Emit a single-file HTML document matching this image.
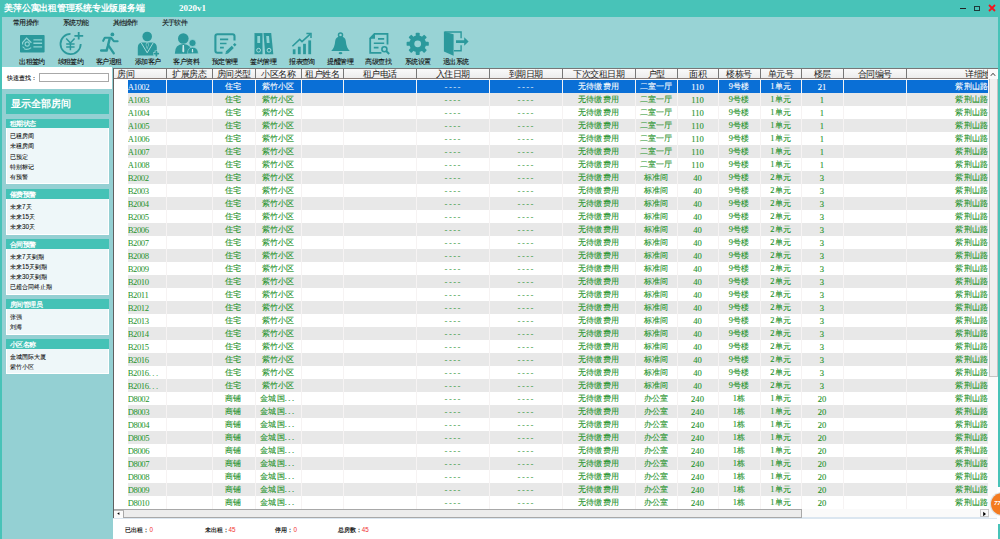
<!DOCTYPE html><html><head><meta charset="utf-8"><style>
*{margin:0;padding:0;box-sizing:border-box}
html,body{width:1000px;height:539px;overflow:hidden}
body{position:relative;background:#48c3b8;font-family:"Liberation Sans",sans-serif;color:#000}
.a{position:absolute}
.t{white-space:nowrap;line-height:1}
#title{left:4.3px;top:3.8px;font-family:"Liberation Serif",serif;font-weight:bold;font-size:9px;color:#fff;letter-spacing:-0.25px}
#ver{left:179px;top:4px;font-family:"Liberation Serif",serif;font-weight:bold;font-size:9px;color:#fff}
#main{left:2px;top:17px;width:996px;height:522px;background:#98d3d5}
.menu{top:19.2px;font-size:7px;letter-spacing:-0.7px;color:#111;-webkit-text-stroke:0.1px #111}
.tb{top:57.6px;font-size:7px;letter-spacing:-0.55px;color:#111;-webkit-text-stroke:0.1px #111;width:40px;text-align:center}
.ico{top:30px;width:30px;height:28px}
#hl{left:2px;top:66px;width:996px;height:1px;background:#8fdad9}
#left{left:2px;top:67px;width:111px;height:472px;background:#94d0d3}
#srch{left:2px;top:67px;width:110px;height:22px;background:#fff}
#srchl{left:6.5px;top:74.8px;font-size:6px;color:#111;-webkit-text-stroke:0.1px #111}
#srchi{left:38.5px;top:73.4px;width:70px;height:9px;border:1px solid #a8a8a8;background:#fff}
#showall{left:6px;top:93.5px;width:102.5px;height:20.3px;background:#44c2b6}
#showallt{left:11px;top:98.5px;font-family:"Liberation Serif",serif;font-size:10.2px;color:#fff;font-weight:bold}
.sh{left:6px;width:102.5px;height:9.8px;background:#44c2b6}
.sht{left:10px;font-size:7px;letter-spacing:-0.6px;color:#fff;font-weight:bold}
.sb{left:6px;width:102.5px;background:#eef7f9;border:1px solid #fff;border-top:0}
.si{left:10px;font-size:6.3px;color:#111;-webkit-text-stroke:0.08px #111}
#grid{left:113px;top:68px;width:885px;height:450px;background:#fff}
#gb{left:113px;top:68px;width:885px;height:450px;border-left:1px solid #606060;border-top:1px solid #777}
#hdr{left:114px;top:69px;width:874px;height:10px;background:linear-gradient(#fafafa,#ececec);border-bottom:1px solid #8a7d78}
.hc{top:69px;height:10px;font-size:9px;letter-spacing:-0.5px;color:#1a1a1a;text-align:center;line-height:11px;overflow:hidden}
.hd{top:69px;width:1.5px;height:10px;background:#777}
.row{left:128px;width:860px;height:13px}
.g{background:#e8e8e8}
.sel{background:#0a6fd6}
.c{height:13px;line-height:14px;font-size:8.4px;letter-spacing:0.15px;color:#24922a;-webkit-text-stroke:0.1px currentColor;text-align:center;overflow:hidden;white-space:nowrap;font-family:"Liberation Serif",serif}
.m{font-family:"Liberation Serif",serif;letter-spacing:-0.4px;font-size:8.6px;-webkit-text-stroke:0}
.n{font-family:"Liberation Serif",serif;font-size:8.6px;letter-spacing:0}
.dsh{font-family:"Liberation Mono",monospace;font-size:7.4px;letter-spacing:-0.1px;-webkit-text-stroke:0.15px currentColor}
.ell{letter-spacing:1.6px}
.sel .c{color:#fff}
.vl{width:1px;background:#f6f3f3}
#vsb{left:988px;top:69px;width:9.5px;height:440px;background:#fbfbfb}
#vth{left:988.5px;top:79px;width:9px;height:298px;background:#efefef;border:1px solid #c4c4c4;border-top:0}
#hsb{left:114px;top:509px;width:884px;height:9px;background:#fafafa;border-bottom:1px solid #dbe6f0}
#hth{left:114px;top:509px;width:688px;height:8.5px;background:#ececec;border:1px solid #a8a8a8;border-left:0}
#status{left:113px;top:518px;width:885px;height:21px;background:#fff;border-top:1px solid #dbe6f0}
.st{top:526.5px;font-size:6.3px;color:#222;font-weight:bold}
.st b{color:#f03030;font-weight:normal}
#orb{left:991.2px;top:492.5px;width:22.4px;height:22.4px;border-radius:50%;background:#f47b20;box-shadow:0 0 0 1.2px #dde3e6}
#rb{left:998px;top:17px;width:2px;height:522px;background:#48c3b8}
#rbw{left:997px;top:487px;width:3px;height:37px;background:#fff}
</style></head><body>
<div class="a" id="main"></div>
<div class="a t" id="title">美萍公寓出租管理系统专业版服务端</div>
<div class="a t" id="ver">2020v1</div>
<div class="a" style="left:960px;top:7.5px;width:5.5px;height:1.3px;background:#222"></div>
<div class="a" style="left:974px;top:5.8px;width:6px;height:5.6px;border:1.2px solid #1e3a3a"></div>
<svg class="a" style="left:988px;top:4px" width="8" height="8" viewBox="0 0 8 8"><path d="M1 1L7 7M7 1L1 7" stroke="#f5141e" stroke-width="1.8"/></svg>
<div class="a t menu" style="left:13px">常用操作</div>
<div class="a t menu" style="left:63px">系统功能</div>
<div class="a t menu" style="left:112.6px">其他操作</div>
<div class="a t menu" style="left:161.8px">关于软件</div>
<div class="a t tb" style="left:12px">出租签约</div>
<div class="a t tb" style="left:50.5px">续租签约</div>
<div class="a t tb" style="left:88.6px">客户退租</div>
<div class="a t tb" style="left:127.6px">添加客户</div>
<div class="a t tb" style="left:166.2px">客户资料</div>
<div class="a t tb" style="left:204.8px">预定管理</div>
<div class="a t tb" style="left:243.2px">签约管理</div>
<div class="a t tb" style="left:282px">报表查询</div>
<div class="a t tb" style="left:320.4px">提醒管理</div>
<div class="a t tb" style="left:358.4px">高级查找</div>
<div class="a t tb" style="left:397.6px">系统设置</div>
<div class="a t tb" style="left:435.8px">退出系统</div>
<svg class="a" style="left:0;top:0" width="480" height="60" viewBox="0 0 480 60">
<g fill="#2b999c" stroke="none">
<!-- 1 出租签约 -->
<rect x="20" y="35" width="24.6" height="17.5" rx="0.8"/>
<g stroke="#8fd3d3" fill="none">
<path d="M33.4 39.9H42.1M33.4 43.3H42.1M33.4 46.9H42.1" stroke-width="1.4"/>
<path d="M22.6 44.6V42.6L26.6 38.2L31.4 42.8" stroke-width="1.2"/>
<circle cx="27.2" cy="44" r="2.1" stroke-width="1.1"/>
<path d="M24.2 48.8Q27.5 50.6 31.2 47.6" stroke-width="1.2"/>
<path d="M22.6 46.6L24.6 48.4" stroke-width="1.1"/>
</g>
<!-- 2 续租签约 -->
<g fill="none" stroke="#2b999c" stroke-width="1.8">
<path d="M70.5 33.9A10.1 10.1 0 1 0 80.7 44"/>
<path d="M74.4 35.8H83.2M78.7 32V39.6"/>
<path d="M66.2 38.6L70.4 43L74.6 38.6M70.4 43V50.3M66.2 44H74.6M66.2 47.1H74.6" stroke-width="1.5"/>
</g>
<!-- 3 客户退租 -->
<circle cx="112.4" cy="34.4" r="1.9"/>
<g fill="none" stroke="#2b999c" stroke-width="2.1" stroke-linecap="round" stroke-linejoin="round">
<path d="M103.2 40.8L104.8 37.8H111.2L113.8 41.2H117.6"/>
<path d="M109.8 38.2L107.9 46L106.6 50.6H101.2" stroke-width="2.5"/>
<path d="M108.2 45.2L113.8 53.4" stroke-width="2.3"/>
</g>
<!-- 4 添加客户 -->
<circle cx="147.2" cy="36.5" r="4.8"/>
<path d="M137.8 55.6V47.5Q137.8 43 142 42.6H152.5Q156.8 43 156.8 47.5V55.6Z"/>
<path d="M141.2 42.8L147.2 52.8L153.2 42.8" fill="none" stroke="#a6dada" stroke-width="1"/>
<path d="M146.2 42.6H148.2L148.7 45L147.2 49.5L145.7 45Z" fill="#a6dada"/>
<path d="M146.5 43.2H147.9L148.2 45L147.2 48.3L146.2 45Z"/>
<path d="M153.3 53.7H159.5M156.4 50.6V56.8" stroke="#a6dada" stroke-width="3.6"/>
<path d="M153.7 53.7H159.1M156.4 51V56.4" stroke="#2b999c" stroke-width="1.8"/>
<!-- 5 客户资料 -->
<circle cx="183.3" cy="38.5" r="5.3"/>
<path d="M174.8 53.7Q174.8 44.3 183.3 44.1Q191.8 44.3 191.8 53.7Z"/>
<circle cx="192.5" cy="43" r="3.6" stroke="#96d3d5" stroke-width="0.8"/>
<path d="M187.5 53.7Q187.5 47.3 192.5 47.2Q198.3 47.3 198.3 53.7Z" stroke="#96d3d5" stroke-width="0.6"/>
<path d="M182.6 45H184L184.3 51.6L183.3 52.4L182.3 51.6Z" fill="#cfe9ea"/>
<path d="M192 49H193L193.2 52L192.5 52.6L191.8 52Z" fill="#cfe9ea"/>
<!-- 6 预定管理 -->
<g fill="none" stroke="#2b999c" stroke-width="2.1">
<path d="M222.5 52.8H217.4Q215.4 52.8 215.4 50.8V36.2Q215.4 34.2 217.4 34.2H232.5Q234.5 34.2 234.5 36.2V40.4"/>
<path d="M220 39.4H228.2M220 43.5H226.5M220 47.6H223.8" stroke-width="1.7"/>
<path d="M226.8 52.6L232.8 46.8" stroke-width="3"/>
<path d="M233.8 45.6L235.6 43.9" stroke-width="2.6"/>
</g>
<path d="M225.3 54.2L226 51.5L227.8 53.4Z"/>
<!-- 7 签约管理 -->
<path d="M254.5 33.1H262.5V54.2H254.5Z"/>
<path d="M263.5 33.1H271.2L273.3 54.2H265.2Z"/>
<g fill="#8fd3d3">
<rect x="257.3" y="36" width="2.8" height="7"/>
<path d="M266.2 36H269L269.6 43H266.8Z"/>
</g>
<g fill="none" stroke="#a9dcdc" stroke-width="1">
<circle cx="258.6" cy="50.2" r="1.9"/>
<circle cx="269" cy="50.2" r="1.9"/>
</g>
<!-- 8 报表查询 -->
<rect x="292.8" y="49.3" width="2.7" height="4.9"/>
<rect x="297.9" y="46.7" width="2.8" height="7.5"/>
<rect x="303.1" y="43.8" width="2.8" height="10.4"/>
<rect x="308.3" y="40.4" width="2.8" height="13.8"/>
<g fill="none" stroke="#2b999c" stroke-width="1.5" stroke-linejoin="miter">
<path d="M292.4 46.2L299.7 39.4L302 41.6L310.2 34.1"/>
<path d="M306.4 33.4H311V38"/>
</g>
<!-- 9 提醒管理 -->
<circle cx="340.5" cy="34.9" r="2" fill="none" stroke="#2b999c" stroke-width="1.5"/>
<path d="M340.5 36.4Q345.3 36.4 345.8 41Q346.3 48 349.8 51H331.2Q334.7 48 335.2 41Q335.7 36.4 340.5 36.4Z"/>
<ellipse cx="340.5" cy="53.2" rx="1.9" ry="1.1"/>
<!-- 10 高级查找 -->
<g fill="none" stroke="#2b999c" stroke-width="1.8">
<path d="M387.5 44.5V33.8H374.5L370.2 38.3V52.8H381.4"/>
<path d="M378 38.9H384.2M373.8 43.3H384.2M373.8 47.6H378.5" stroke-width="1.6"/>
<circle cx="384.4" cy="49.2" r="2.5" stroke-width="1.6"/>
<path d="M386.2 51L389.2 54" stroke-width="1.9"/>
</g>
<path d="M369.3 38.8L375 33V38.8Z"/>
<!-- 11 系统设置 -->
<g transform="translate(417.7 43.8)">
<circle r="8.3"/><rect x="-2" y="-11.1" width="4" height="5.5" rx="0.9" transform="rotate(0)"/><rect x="-2" y="-11.1" width="4" height="5.5" rx="0.9" transform="rotate(45)"/><rect x="-2" y="-11.1" width="4" height="5.5" rx="0.9" transform="rotate(90)"/><rect x="-2" y="-11.1" width="4" height="5.5" rx="0.9" transform="rotate(135)"/><rect x="-2" y="-11.1" width="4" height="5.5" rx="0.9" transform="rotate(180)"/><rect x="-2" y="-11.1" width="4" height="5.5" rx="0.9" transform="rotate(225)"/><rect x="-2" y="-11.1" width="4" height="5.5" rx="0.9" transform="rotate(270)"/><rect x="-2" y="-11.1" width="4" height="5.5" rx="0.9" transform="rotate(315)"/>
<circle r="3.4" fill="#98d3d5"/>
</g>
<!-- 12 退出系统 -->
<path d="M444.6 32H461.1V38.2M461.1 45.2V50.8H454" fill="none" stroke="#2b999c" stroke-width="1.4"/>
<path d="M443.9 31.5L453.6 34.3V55.8L443.9 51.6Z"/>
<path d="M456 40.2H464.2V37.3L468.6 41.6L464.2 45.8V43H456Z"/>
</g>
</svg>

<div class="a" id="hl"></div>
<div class="a" id="left"></div>
<div class="a" id="srch"></div>
<div class="a t" id="srchl">快速查找：</div>
<div class="a" id="srchi"></div>
<div class="a" id="showall"></div>
<div class="a t" id="showallt">显示全部房间</div>
<div class="a sh" style="top:118.6px"></div>
<div class="a t sht" style="top:120.39999999999999px">租期状态</div>
<div class="a sb" style="top:128.4px;height:56.0px"></div>
<div class="a t si" style="top:133.20000000000002px">已租房间</div>
<div class="a t si" style="top:143.4px">未租房间</div>
<div class="a t si" style="top:153.60000000000002px">已预定</div>
<div class="a t si" style="top:163.8px">特别标记</div>
<div class="a t si" style="top:174.0px">有预警</div>
<div class="a sh" style="top:189.2px"></div>
<div class="a t sht" style="top:191.0px">催费预警</div>
<div class="a sb" style="top:199.0px;height:35.599999999999994px"></div>
<div class="a t si" style="top:203.8px">未来7天</div>
<div class="a t si" style="top:214.0px">未来15天</div>
<div class="a t si" style="top:224.20000000000002px">未来30天</div>
<div class="a sh" style="top:239.2px"></div>
<div class="a t sht" style="top:241.0px">合同预警</div>
<div class="a sb" style="top:249.0px;height:45.8px"></div>
<div class="a t si" style="top:253.8px">未来7天到期</div>
<div class="a t si" style="top:264.0px">未来15天到期</div>
<div class="a t si" style="top:274.2px">未来30天到期</div>
<div class="a t si" style="top:284.40000000000003px">已超合同终止期</div>
<div class="a sh" style="top:299.4px"></div>
<div class="a t sht" style="top:301.2px">房间管理员</div>
<div class="a sb" style="top:309.2px;height:25.4px"></div>
<div class="a t si" style="top:314.0px">张强</div>
<div class="a t si" style="top:324.2px">刘海</div>
<div class="a sh" style="top:339.2px"></div>
<div class="a t sht" style="top:341.0px">小区名称</div>
<div class="a sb" style="top:349.0px;height:25.4px"></div>
<div class="a t si" style="top:353.8px">金城国际大厦</div>
<div class="a t si" style="top:364.0px">紫竹小区</div>
<div class="a" id="grid"></div>
<div class="a" id="gb"></div>
<div class="a" id="hdr"></div>
<div class="a hc" style="left:114px;width:52px;text-align:left;padding-left:3px">房间</div>
<div class="a hc" style="left:166px;width:46px">扩展房态</div>
<div class="a hd" style="left:165.5px"></div>
<div class="a hc" style="left:212px;width:43px">房间类型</div>
<div class="a hd" style="left:211.5px"></div>
<div class="a hc" style="left:255px;width:46px">小区名称</div>
<div class="a hd" style="left:254.5px"></div>
<div class="a hc" style="left:301px;width:42px">租户姓名</div>
<div class="a hd" style="left:300.5px"></div>
<div class="a hc" style="left:343px;width:73px">租户电话</div>
<div class="a hd" style="left:342.5px"></div>
<div class="a hc" style="left:416px;width:73px">入住日期</div>
<div class="a hd" style="left:415.5px"></div>
<div class="a hc" style="left:489px;width:73px">到期日期</div>
<div class="a hd" style="left:488.5px"></div>
<div class="a hc" style="left:562px;width:73px">下次交租日期</div>
<div class="a hd" style="left:561.5px"></div>
<div class="a hc" style="left:635px;width:42px">户型</div>
<div class="a hd" style="left:634.5px"></div>
<div class="a hc" style="left:677px;width:41px">面积</div>
<div class="a hd" style="left:676.5px"></div>
<div class="a hc" style="left:718px;width:42px">楼栋号</div>
<div class="a hd" style="left:717.5px"></div>
<div class="a hc" style="left:760px;width:41px">单元号</div>
<div class="a hd" style="left:759.5px"></div>
<div class="a hc" style="left:801px;width:42px">楼层</div>
<div class="a hd" style="left:800.5px"></div>
<div class="a hc" style="left:843px;width:63px">合同编号</div>
<div class="a hd" style="left:842.5px"></div>
<div class="a hc" style="left:906px;width:82px;text-align:right"><span style="margin-right:-11px">详细地址</span></div>
<div class="a hd" style="left:905.5px"></div>
<div class="a row sel" style="top:80px">
<div class="a c m" style="left:0px;width:38px;text-align:left;padding-left:0;text-indent:-0.3px">A1002</div>
<div class="a c" style="left:38px;width:46px"></div>
<div class="a c" style="left:84px;width:43px">住宅</div>
<div class="a c" style="left:127px;width:46px">紫竹小区</div>
<div class="a c" style="left:173px;width:42px"></div>
<div class="a c" style="left:215px;width:73px"></div>
<div class="a c dsh" style="left:288px;width:73px">----</div>
<div class="a c dsh" style="left:361px;width:73px">----</div>
<div class="a c" style="left:434px;width:73px">无待缴费用</div>
<div class="a c" style="left:507px;width:42px">二室一厅</div>
<div class="a c n" style="left:549px;width:41px">110</div>
<div class="a c" style="left:590px;width:42px">9号楼</div>
<div class="a c" style="left:632px;width:41px">1单元</div>
<div class="a c n" style="left:673px;width:42px">21</div>
<div class="a c" style="left:715px;width:63px"></div>
<div class="a c" style="left:778px;width:82px;text-align:right;padding-right:0">紫荆山路</div>
</div>
<div class="a row g" style="top:93px">
<div class="a c m" style="left:0px;width:38px;text-align:left;padding-left:0;text-indent:-0.3px">A1003</div>
<div class="a c" style="left:38px;width:46px"></div>
<div class="a c" style="left:84px;width:43px">住宅</div>
<div class="a c" style="left:127px;width:46px">紫竹小区</div>
<div class="a c" style="left:173px;width:42px"></div>
<div class="a c" style="left:215px;width:73px"></div>
<div class="a c dsh" style="left:288px;width:73px">----</div>
<div class="a c dsh" style="left:361px;width:73px">----</div>
<div class="a c" style="left:434px;width:73px">无待缴费用</div>
<div class="a c" style="left:507px;width:42px">二室一厅</div>
<div class="a c n" style="left:549px;width:41px">110</div>
<div class="a c" style="left:590px;width:42px">9号楼</div>
<div class="a c" style="left:632px;width:41px">1单元</div>
<div class="a c n" style="left:673px;width:42px">1</div>
<div class="a c" style="left:715px;width:63px"></div>
<div class="a c" style="left:778px;width:82px;text-align:right;padding-right:0">紫荆山路</div>
</div>
<div class="a row " style="top:106px">
<div class="a c m" style="left:0px;width:38px;text-align:left;padding-left:0;text-indent:-0.3px">A1004</div>
<div class="a c" style="left:38px;width:46px"></div>
<div class="a c" style="left:84px;width:43px">住宅</div>
<div class="a c" style="left:127px;width:46px">紫竹小区</div>
<div class="a c" style="left:173px;width:42px"></div>
<div class="a c" style="left:215px;width:73px"></div>
<div class="a c dsh" style="left:288px;width:73px">----</div>
<div class="a c dsh" style="left:361px;width:73px">----</div>
<div class="a c" style="left:434px;width:73px">无待缴费用</div>
<div class="a c" style="left:507px;width:42px">二室一厅</div>
<div class="a c n" style="left:549px;width:41px">110</div>
<div class="a c" style="left:590px;width:42px">9号楼</div>
<div class="a c" style="left:632px;width:41px">1单元</div>
<div class="a c n" style="left:673px;width:42px">1</div>
<div class="a c" style="left:715px;width:63px"></div>
<div class="a c" style="left:778px;width:82px;text-align:right;padding-right:0">紫荆山路</div>
</div>
<div class="a row g" style="top:119px">
<div class="a c m" style="left:0px;width:38px;text-align:left;padding-left:0;text-indent:-0.3px">A1005</div>
<div class="a c" style="left:38px;width:46px"></div>
<div class="a c" style="left:84px;width:43px">住宅</div>
<div class="a c" style="left:127px;width:46px">紫竹小区</div>
<div class="a c" style="left:173px;width:42px"></div>
<div class="a c" style="left:215px;width:73px"></div>
<div class="a c dsh" style="left:288px;width:73px">----</div>
<div class="a c dsh" style="left:361px;width:73px">----</div>
<div class="a c" style="left:434px;width:73px">无待缴费用</div>
<div class="a c" style="left:507px;width:42px">二室一厅</div>
<div class="a c n" style="left:549px;width:41px">110</div>
<div class="a c" style="left:590px;width:42px">9号楼</div>
<div class="a c" style="left:632px;width:41px">1单元</div>
<div class="a c n" style="left:673px;width:42px">1</div>
<div class="a c" style="left:715px;width:63px"></div>
<div class="a c" style="left:778px;width:82px;text-align:right;padding-right:0">紫荆山路</div>
</div>
<div class="a row " style="top:132px">
<div class="a c m" style="left:0px;width:38px;text-align:left;padding-left:0;text-indent:-0.3px">A1006</div>
<div class="a c" style="left:38px;width:46px"></div>
<div class="a c" style="left:84px;width:43px">住宅</div>
<div class="a c" style="left:127px;width:46px">紫竹小区</div>
<div class="a c" style="left:173px;width:42px"></div>
<div class="a c" style="left:215px;width:73px"></div>
<div class="a c dsh" style="left:288px;width:73px">----</div>
<div class="a c dsh" style="left:361px;width:73px">----</div>
<div class="a c" style="left:434px;width:73px">无待缴费用</div>
<div class="a c" style="left:507px;width:42px">二室一厅</div>
<div class="a c n" style="left:549px;width:41px">110</div>
<div class="a c" style="left:590px;width:42px">9号楼</div>
<div class="a c" style="left:632px;width:41px">1单元</div>
<div class="a c n" style="left:673px;width:42px">1</div>
<div class="a c" style="left:715px;width:63px"></div>
<div class="a c" style="left:778px;width:82px;text-align:right;padding-right:0">紫荆山路</div>
</div>
<div class="a row g" style="top:145px">
<div class="a c m" style="left:0px;width:38px;text-align:left;padding-left:0;text-indent:-0.3px">A1007</div>
<div class="a c" style="left:38px;width:46px"></div>
<div class="a c" style="left:84px;width:43px">住宅</div>
<div class="a c" style="left:127px;width:46px">紫竹小区</div>
<div class="a c" style="left:173px;width:42px"></div>
<div class="a c" style="left:215px;width:73px"></div>
<div class="a c dsh" style="left:288px;width:73px">----</div>
<div class="a c dsh" style="left:361px;width:73px">----</div>
<div class="a c" style="left:434px;width:73px">无待缴费用</div>
<div class="a c" style="left:507px;width:42px">二室一厅</div>
<div class="a c n" style="left:549px;width:41px">110</div>
<div class="a c" style="left:590px;width:42px">9号楼</div>
<div class="a c" style="left:632px;width:41px">1单元</div>
<div class="a c n" style="left:673px;width:42px">1</div>
<div class="a c" style="left:715px;width:63px"></div>
<div class="a c" style="left:778px;width:82px;text-align:right;padding-right:0">紫荆山路</div>
</div>
<div class="a row " style="top:158px">
<div class="a c m" style="left:0px;width:38px;text-align:left;padding-left:0;text-indent:-0.3px">A1008</div>
<div class="a c" style="left:38px;width:46px"></div>
<div class="a c" style="left:84px;width:43px">住宅</div>
<div class="a c" style="left:127px;width:46px">紫竹小区</div>
<div class="a c" style="left:173px;width:42px"></div>
<div class="a c" style="left:215px;width:73px"></div>
<div class="a c dsh" style="left:288px;width:73px">----</div>
<div class="a c dsh" style="left:361px;width:73px">----</div>
<div class="a c" style="left:434px;width:73px">无待缴费用</div>
<div class="a c" style="left:507px;width:42px">二室一厅</div>
<div class="a c n" style="left:549px;width:41px">110</div>
<div class="a c" style="left:590px;width:42px">9号楼</div>
<div class="a c" style="left:632px;width:41px">1单元</div>
<div class="a c n" style="left:673px;width:42px">1</div>
<div class="a c" style="left:715px;width:63px"></div>
<div class="a c" style="left:778px;width:82px;text-align:right;padding-right:0">紫荆山路</div>
</div>
<div class="a row g" style="top:171px">
<div class="a c m" style="left:0px;width:38px;text-align:left;padding-left:0;text-indent:-0.3px">B2002</div>
<div class="a c" style="left:38px;width:46px"></div>
<div class="a c" style="left:84px;width:43px">住宅</div>
<div class="a c" style="left:127px;width:46px">紫竹小区</div>
<div class="a c" style="left:173px;width:42px"></div>
<div class="a c" style="left:215px;width:73px"></div>
<div class="a c dsh" style="left:288px;width:73px">----</div>
<div class="a c dsh" style="left:361px;width:73px">----</div>
<div class="a c" style="left:434px;width:73px">无待缴费用</div>
<div class="a c" style="left:507px;width:42px">标准间</div>
<div class="a c n" style="left:549px;width:41px">40</div>
<div class="a c" style="left:590px;width:42px">9号楼</div>
<div class="a c" style="left:632px;width:41px">2单元</div>
<div class="a c n" style="left:673px;width:42px">3</div>
<div class="a c" style="left:715px;width:63px"></div>
<div class="a c" style="left:778px;width:82px;text-align:right;padding-right:0">紫荆山路</div>
</div>
<div class="a row " style="top:184px">
<div class="a c m" style="left:0px;width:38px;text-align:left;padding-left:0;text-indent:-0.3px">B2003</div>
<div class="a c" style="left:38px;width:46px"></div>
<div class="a c" style="left:84px;width:43px">住宅</div>
<div class="a c" style="left:127px;width:46px">紫竹小区</div>
<div class="a c" style="left:173px;width:42px"></div>
<div class="a c" style="left:215px;width:73px"></div>
<div class="a c dsh" style="left:288px;width:73px">----</div>
<div class="a c dsh" style="left:361px;width:73px">----</div>
<div class="a c" style="left:434px;width:73px">无待缴费用</div>
<div class="a c" style="left:507px;width:42px">标准间</div>
<div class="a c n" style="left:549px;width:41px">40</div>
<div class="a c" style="left:590px;width:42px">9号楼</div>
<div class="a c" style="left:632px;width:41px">2单元</div>
<div class="a c n" style="left:673px;width:42px">3</div>
<div class="a c" style="left:715px;width:63px"></div>
<div class="a c" style="left:778px;width:82px;text-align:right;padding-right:0">紫荆山路</div>
</div>
<div class="a row g" style="top:197px">
<div class="a c m" style="left:0px;width:38px;text-align:left;padding-left:0;text-indent:-0.3px">B2004</div>
<div class="a c" style="left:38px;width:46px"></div>
<div class="a c" style="left:84px;width:43px">住宅</div>
<div class="a c" style="left:127px;width:46px">紫竹小区</div>
<div class="a c" style="left:173px;width:42px"></div>
<div class="a c" style="left:215px;width:73px"></div>
<div class="a c dsh" style="left:288px;width:73px">----</div>
<div class="a c dsh" style="left:361px;width:73px">----</div>
<div class="a c" style="left:434px;width:73px">无待缴费用</div>
<div class="a c" style="left:507px;width:42px">标准间</div>
<div class="a c n" style="left:549px;width:41px">40</div>
<div class="a c" style="left:590px;width:42px">9号楼</div>
<div class="a c" style="left:632px;width:41px">2单元</div>
<div class="a c n" style="left:673px;width:42px">3</div>
<div class="a c" style="left:715px;width:63px"></div>
<div class="a c" style="left:778px;width:82px;text-align:right;padding-right:0">紫荆山路</div>
</div>
<div class="a row " style="top:210px">
<div class="a c m" style="left:0px;width:38px;text-align:left;padding-left:0;text-indent:-0.3px">B2005</div>
<div class="a c" style="left:38px;width:46px"></div>
<div class="a c" style="left:84px;width:43px">住宅</div>
<div class="a c" style="left:127px;width:46px">紫竹小区</div>
<div class="a c" style="left:173px;width:42px"></div>
<div class="a c" style="left:215px;width:73px"></div>
<div class="a c dsh" style="left:288px;width:73px">----</div>
<div class="a c dsh" style="left:361px;width:73px">----</div>
<div class="a c" style="left:434px;width:73px">无待缴费用</div>
<div class="a c" style="left:507px;width:42px">标准间</div>
<div class="a c n" style="left:549px;width:41px">40</div>
<div class="a c" style="left:590px;width:42px">9号楼</div>
<div class="a c" style="left:632px;width:41px">2单元</div>
<div class="a c n" style="left:673px;width:42px">3</div>
<div class="a c" style="left:715px;width:63px"></div>
<div class="a c" style="left:778px;width:82px;text-align:right;padding-right:0">紫荆山路</div>
</div>
<div class="a row g" style="top:223px">
<div class="a c m" style="left:0px;width:38px;text-align:left;padding-left:0;text-indent:-0.3px">B2006</div>
<div class="a c" style="left:38px;width:46px"></div>
<div class="a c" style="left:84px;width:43px">住宅</div>
<div class="a c" style="left:127px;width:46px">紫竹小区</div>
<div class="a c" style="left:173px;width:42px"></div>
<div class="a c" style="left:215px;width:73px"></div>
<div class="a c dsh" style="left:288px;width:73px">----</div>
<div class="a c dsh" style="left:361px;width:73px">----</div>
<div class="a c" style="left:434px;width:73px">无待缴费用</div>
<div class="a c" style="left:507px;width:42px">标准间</div>
<div class="a c n" style="left:549px;width:41px">40</div>
<div class="a c" style="left:590px;width:42px">9号楼</div>
<div class="a c" style="left:632px;width:41px">2单元</div>
<div class="a c n" style="left:673px;width:42px">3</div>
<div class="a c" style="left:715px;width:63px"></div>
<div class="a c" style="left:778px;width:82px;text-align:right;padding-right:0">紫荆山路</div>
</div>
<div class="a row " style="top:236px">
<div class="a c m" style="left:0px;width:38px;text-align:left;padding-left:0;text-indent:-0.3px">B2007</div>
<div class="a c" style="left:38px;width:46px"></div>
<div class="a c" style="left:84px;width:43px">住宅</div>
<div class="a c" style="left:127px;width:46px">紫竹小区</div>
<div class="a c" style="left:173px;width:42px"></div>
<div class="a c" style="left:215px;width:73px"></div>
<div class="a c dsh" style="left:288px;width:73px">----</div>
<div class="a c dsh" style="left:361px;width:73px">----</div>
<div class="a c" style="left:434px;width:73px">无待缴费用</div>
<div class="a c" style="left:507px;width:42px">标准间</div>
<div class="a c n" style="left:549px;width:41px">40</div>
<div class="a c" style="left:590px;width:42px">9号楼</div>
<div class="a c" style="left:632px;width:41px">2单元</div>
<div class="a c n" style="left:673px;width:42px">3</div>
<div class="a c" style="left:715px;width:63px"></div>
<div class="a c" style="left:778px;width:82px;text-align:right;padding-right:0">紫荆山路</div>
</div>
<div class="a row g" style="top:249px">
<div class="a c m" style="left:0px;width:38px;text-align:left;padding-left:0;text-indent:-0.3px">B2008</div>
<div class="a c" style="left:38px;width:46px"></div>
<div class="a c" style="left:84px;width:43px">住宅</div>
<div class="a c" style="left:127px;width:46px">紫竹小区</div>
<div class="a c" style="left:173px;width:42px"></div>
<div class="a c" style="left:215px;width:73px"></div>
<div class="a c dsh" style="left:288px;width:73px">----</div>
<div class="a c dsh" style="left:361px;width:73px">----</div>
<div class="a c" style="left:434px;width:73px">无待缴费用</div>
<div class="a c" style="left:507px;width:42px">标准间</div>
<div class="a c n" style="left:549px;width:41px">40</div>
<div class="a c" style="left:590px;width:42px">9号楼</div>
<div class="a c" style="left:632px;width:41px">2单元</div>
<div class="a c n" style="left:673px;width:42px">3</div>
<div class="a c" style="left:715px;width:63px"></div>
<div class="a c" style="left:778px;width:82px;text-align:right;padding-right:0">紫荆山路</div>
</div>
<div class="a row " style="top:262px">
<div class="a c m" style="left:0px;width:38px;text-align:left;padding-left:0;text-indent:-0.3px">B2009</div>
<div class="a c" style="left:38px;width:46px"></div>
<div class="a c" style="left:84px;width:43px">住宅</div>
<div class="a c" style="left:127px;width:46px">紫竹小区</div>
<div class="a c" style="left:173px;width:42px"></div>
<div class="a c" style="left:215px;width:73px"></div>
<div class="a c dsh" style="left:288px;width:73px">----</div>
<div class="a c dsh" style="left:361px;width:73px">----</div>
<div class="a c" style="left:434px;width:73px">无待缴费用</div>
<div class="a c" style="left:507px;width:42px">标准间</div>
<div class="a c n" style="left:549px;width:41px">40</div>
<div class="a c" style="left:590px;width:42px">9号楼</div>
<div class="a c" style="left:632px;width:41px">2单元</div>
<div class="a c n" style="left:673px;width:42px">3</div>
<div class="a c" style="left:715px;width:63px"></div>
<div class="a c" style="left:778px;width:82px;text-align:right;padding-right:0">紫荆山路</div>
</div>
<div class="a row g" style="top:275px">
<div class="a c m" style="left:0px;width:38px;text-align:left;padding-left:0;text-indent:-0.3px">B2010</div>
<div class="a c" style="left:38px;width:46px"></div>
<div class="a c" style="left:84px;width:43px">住宅</div>
<div class="a c" style="left:127px;width:46px">紫竹小区</div>
<div class="a c" style="left:173px;width:42px"></div>
<div class="a c" style="left:215px;width:73px"></div>
<div class="a c dsh" style="left:288px;width:73px">----</div>
<div class="a c dsh" style="left:361px;width:73px">----</div>
<div class="a c" style="left:434px;width:73px">无待缴费用</div>
<div class="a c" style="left:507px;width:42px">标准间</div>
<div class="a c n" style="left:549px;width:41px">40</div>
<div class="a c" style="left:590px;width:42px">9号楼</div>
<div class="a c" style="left:632px;width:41px">2单元</div>
<div class="a c n" style="left:673px;width:42px">3</div>
<div class="a c" style="left:715px;width:63px"></div>
<div class="a c" style="left:778px;width:82px;text-align:right;padding-right:0">紫荆山路</div>
</div>
<div class="a row " style="top:288px">
<div class="a c m" style="left:0px;width:38px;text-align:left;padding-left:0;text-indent:-0.3px">B2011</div>
<div class="a c" style="left:38px;width:46px"></div>
<div class="a c" style="left:84px;width:43px">住宅</div>
<div class="a c" style="left:127px;width:46px">紫竹小区</div>
<div class="a c" style="left:173px;width:42px"></div>
<div class="a c" style="left:215px;width:73px"></div>
<div class="a c dsh" style="left:288px;width:73px">----</div>
<div class="a c dsh" style="left:361px;width:73px">----</div>
<div class="a c" style="left:434px;width:73px">无待缴费用</div>
<div class="a c" style="left:507px;width:42px">标准间</div>
<div class="a c n" style="left:549px;width:41px">40</div>
<div class="a c" style="left:590px;width:42px">9号楼</div>
<div class="a c" style="left:632px;width:41px">2单元</div>
<div class="a c n" style="left:673px;width:42px">3</div>
<div class="a c" style="left:715px;width:63px"></div>
<div class="a c" style="left:778px;width:82px;text-align:right;padding-right:0">紫荆山路</div>
</div>
<div class="a row g" style="top:301px">
<div class="a c m" style="left:0px;width:38px;text-align:left;padding-left:0;text-indent:-0.3px">B2012</div>
<div class="a c" style="left:38px;width:46px"></div>
<div class="a c" style="left:84px;width:43px">住宅</div>
<div class="a c" style="left:127px;width:46px">紫竹小区</div>
<div class="a c" style="left:173px;width:42px"></div>
<div class="a c" style="left:215px;width:73px"></div>
<div class="a c dsh" style="left:288px;width:73px">----</div>
<div class="a c dsh" style="left:361px;width:73px">----</div>
<div class="a c" style="left:434px;width:73px">无待缴费用</div>
<div class="a c" style="left:507px;width:42px">标准间</div>
<div class="a c n" style="left:549px;width:41px">40</div>
<div class="a c" style="left:590px;width:42px">9号楼</div>
<div class="a c" style="left:632px;width:41px">2单元</div>
<div class="a c n" style="left:673px;width:42px">3</div>
<div class="a c" style="left:715px;width:63px"></div>
<div class="a c" style="left:778px;width:82px;text-align:right;padding-right:0">紫荆山路</div>
</div>
<div class="a row " style="top:314px">
<div class="a c m" style="left:0px;width:38px;text-align:left;padding-left:0;text-indent:-0.3px">B2013</div>
<div class="a c" style="left:38px;width:46px"></div>
<div class="a c" style="left:84px;width:43px">住宅</div>
<div class="a c" style="left:127px;width:46px">紫竹小区</div>
<div class="a c" style="left:173px;width:42px"></div>
<div class="a c" style="left:215px;width:73px"></div>
<div class="a c dsh" style="left:288px;width:73px">----</div>
<div class="a c dsh" style="left:361px;width:73px">----</div>
<div class="a c" style="left:434px;width:73px">无待缴费用</div>
<div class="a c" style="left:507px;width:42px">标准间</div>
<div class="a c n" style="left:549px;width:41px">40</div>
<div class="a c" style="left:590px;width:42px">9号楼</div>
<div class="a c" style="left:632px;width:41px">2单元</div>
<div class="a c n" style="left:673px;width:42px">3</div>
<div class="a c" style="left:715px;width:63px"></div>
<div class="a c" style="left:778px;width:82px;text-align:right;padding-right:0">紫荆山路</div>
</div>
<div class="a row g" style="top:327px">
<div class="a c m" style="left:0px;width:38px;text-align:left;padding-left:0;text-indent:-0.3px">B2014</div>
<div class="a c" style="left:38px;width:46px"></div>
<div class="a c" style="left:84px;width:43px">住宅</div>
<div class="a c" style="left:127px;width:46px">紫竹小区</div>
<div class="a c" style="left:173px;width:42px"></div>
<div class="a c" style="left:215px;width:73px"></div>
<div class="a c dsh" style="left:288px;width:73px">----</div>
<div class="a c dsh" style="left:361px;width:73px">----</div>
<div class="a c" style="left:434px;width:73px">无待缴费用</div>
<div class="a c" style="left:507px;width:42px">标准间</div>
<div class="a c n" style="left:549px;width:41px">40</div>
<div class="a c" style="left:590px;width:42px">9号楼</div>
<div class="a c" style="left:632px;width:41px">2单元</div>
<div class="a c n" style="left:673px;width:42px">3</div>
<div class="a c" style="left:715px;width:63px"></div>
<div class="a c" style="left:778px;width:82px;text-align:right;padding-right:0">紫荆山路</div>
</div>
<div class="a row " style="top:340px">
<div class="a c m" style="left:0px;width:38px;text-align:left;padding-left:0;text-indent:-0.3px">B2015</div>
<div class="a c" style="left:38px;width:46px"></div>
<div class="a c" style="left:84px;width:43px">住宅</div>
<div class="a c" style="left:127px;width:46px">紫竹小区</div>
<div class="a c" style="left:173px;width:42px"></div>
<div class="a c" style="left:215px;width:73px"></div>
<div class="a c dsh" style="left:288px;width:73px">----</div>
<div class="a c dsh" style="left:361px;width:73px">----</div>
<div class="a c" style="left:434px;width:73px">无待缴费用</div>
<div class="a c" style="left:507px;width:42px">标准间</div>
<div class="a c n" style="left:549px;width:41px">40</div>
<div class="a c" style="left:590px;width:42px">9号楼</div>
<div class="a c" style="left:632px;width:41px">2单元</div>
<div class="a c n" style="left:673px;width:42px">3</div>
<div class="a c" style="left:715px;width:63px"></div>
<div class="a c" style="left:778px;width:82px;text-align:right;padding-right:0">紫荆山路</div>
</div>
<div class="a row g" style="top:353px">
<div class="a c m" style="left:0px;width:38px;text-align:left;padding-left:0;text-indent:-0.3px">B2016</div>
<div class="a c" style="left:38px;width:46px"></div>
<div class="a c" style="left:84px;width:43px">住宅</div>
<div class="a c" style="left:127px;width:46px">紫竹小区</div>
<div class="a c" style="left:173px;width:42px"></div>
<div class="a c" style="left:215px;width:73px"></div>
<div class="a c dsh" style="left:288px;width:73px">----</div>
<div class="a c dsh" style="left:361px;width:73px">----</div>
<div class="a c" style="left:434px;width:73px">无待缴费用</div>
<div class="a c" style="left:507px;width:42px">标准间</div>
<div class="a c n" style="left:549px;width:41px">40</div>
<div class="a c" style="left:590px;width:42px">9号楼</div>
<div class="a c" style="left:632px;width:41px">2单元</div>
<div class="a c n" style="left:673px;width:42px">3</div>
<div class="a c" style="left:715px;width:63px"></div>
<div class="a c" style="left:778px;width:82px;text-align:right;padding-right:0">紫荆山路</div>
</div>
<div class="a row " style="top:366px">
<div class="a c m" style="left:0px;width:38px;text-align:left;padding-left:0;text-indent:-0.3px">B2016<span class="ell">...</span></div>
<div class="a c" style="left:38px;width:46px"></div>
<div class="a c" style="left:84px;width:43px">住宅</div>
<div class="a c" style="left:127px;width:46px">紫竹小区</div>
<div class="a c" style="left:173px;width:42px"></div>
<div class="a c" style="left:215px;width:73px"></div>
<div class="a c dsh" style="left:288px;width:73px">----</div>
<div class="a c dsh" style="left:361px;width:73px">----</div>
<div class="a c" style="left:434px;width:73px">无待缴费用</div>
<div class="a c" style="left:507px;width:42px">标准间</div>
<div class="a c n" style="left:549px;width:41px">40</div>
<div class="a c" style="left:590px;width:42px">9号楼</div>
<div class="a c" style="left:632px;width:41px">2单元</div>
<div class="a c n" style="left:673px;width:42px">3</div>
<div class="a c" style="left:715px;width:63px"></div>
<div class="a c" style="left:778px;width:82px;text-align:right;padding-right:0">紫荆山路</div>
</div>
<div class="a row g" style="top:379px">
<div class="a c m" style="left:0px;width:38px;text-align:left;padding-left:0;text-indent:-0.3px">B2016<span class="ell">...</span></div>
<div class="a c" style="left:38px;width:46px"></div>
<div class="a c" style="left:84px;width:43px">住宅</div>
<div class="a c" style="left:127px;width:46px">紫竹小区</div>
<div class="a c" style="left:173px;width:42px"></div>
<div class="a c" style="left:215px;width:73px"></div>
<div class="a c dsh" style="left:288px;width:73px">----</div>
<div class="a c dsh" style="left:361px;width:73px">----</div>
<div class="a c" style="left:434px;width:73px">无待缴费用</div>
<div class="a c" style="left:507px;width:42px">标准间</div>
<div class="a c n" style="left:549px;width:41px">40</div>
<div class="a c" style="left:590px;width:42px">9号楼</div>
<div class="a c" style="left:632px;width:41px">2单元</div>
<div class="a c n" style="left:673px;width:42px">3</div>
<div class="a c" style="left:715px;width:63px"></div>
<div class="a c" style="left:778px;width:82px;text-align:right;padding-right:0">紫荆山路</div>
</div>
<div class="a row " style="top:392px">
<div class="a c m" style="left:0px;width:38px;text-align:left;padding-left:0;text-indent:-0.3px">D8002</div>
<div class="a c" style="left:38px;width:46px"></div>
<div class="a c" style="left:84px;width:43px">商铺</div>
<div class="a c" style="left:127px;width:46px">金城国<span class="ell">...</span></div>
<div class="a c" style="left:173px;width:42px"></div>
<div class="a c" style="left:215px;width:73px"></div>
<div class="a c dsh" style="left:288px;width:73px">----</div>
<div class="a c dsh" style="left:361px;width:73px">----</div>
<div class="a c" style="left:434px;width:73px">无待缴费用</div>
<div class="a c" style="left:507px;width:42px">办公室</div>
<div class="a c n" style="left:549px;width:41px">240</div>
<div class="a c" style="left:590px;width:42px">1栋</div>
<div class="a c" style="left:632px;width:41px">1单元</div>
<div class="a c n" style="left:673px;width:42px">20</div>
<div class="a c" style="left:715px;width:63px"></div>
<div class="a c" style="left:778px;width:82px;text-align:right;padding-right:0">紫荆山路</div>
</div>
<div class="a row g" style="top:405px">
<div class="a c m" style="left:0px;width:38px;text-align:left;padding-left:0;text-indent:-0.3px">D8003</div>
<div class="a c" style="left:38px;width:46px"></div>
<div class="a c" style="left:84px;width:43px">商铺</div>
<div class="a c" style="left:127px;width:46px">金城国<span class="ell">...</span></div>
<div class="a c" style="left:173px;width:42px"></div>
<div class="a c" style="left:215px;width:73px"></div>
<div class="a c dsh" style="left:288px;width:73px">----</div>
<div class="a c dsh" style="left:361px;width:73px">----</div>
<div class="a c" style="left:434px;width:73px">无待缴费用</div>
<div class="a c" style="left:507px;width:42px">办公室</div>
<div class="a c n" style="left:549px;width:41px">240</div>
<div class="a c" style="left:590px;width:42px">1栋</div>
<div class="a c" style="left:632px;width:41px">1单元</div>
<div class="a c n" style="left:673px;width:42px">20</div>
<div class="a c" style="left:715px;width:63px"></div>
<div class="a c" style="left:778px;width:82px;text-align:right;padding-right:0">紫荆山路</div>
</div>
<div class="a row " style="top:418px">
<div class="a c m" style="left:0px;width:38px;text-align:left;padding-left:0;text-indent:-0.3px">D8004</div>
<div class="a c" style="left:38px;width:46px"></div>
<div class="a c" style="left:84px;width:43px">商铺</div>
<div class="a c" style="left:127px;width:46px">金城国<span class="ell">...</span></div>
<div class="a c" style="left:173px;width:42px"></div>
<div class="a c" style="left:215px;width:73px"></div>
<div class="a c dsh" style="left:288px;width:73px">----</div>
<div class="a c dsh" style="left:361px;width:73px">----</div>
<div class="a c" style="left:434px;width:73px">无待缴费用</div>
<div class="a c" style="left:507px;width:42px">办公室</div>
<div class="a c n" style="left:549px;width:41px">240</div>
<div class="a c" style="left:590px;width:42px">1栋</div>
<div class="a c" style="left:632px;width:41px">1单元</div>
<div class="a c n" style="left:673px;width:42px">20</div>
<div class="a c" style="left:715px;width:63px"></div>
<div class="a c" style="left:778px;width:82px;text-align:right;padding-right:0">紫荆山路</div>
</div>
<div class="a row g" style="top:431px">
<div class="a c m" style="left:0px;width:38px;text-align:left;padding-left:0;text-indent:-0.3px">D8005</div>
<div class="a c" style="left:38px;width:46px"></div>
<div class="a c" style="left:84px;width:43px">商铺</div>
<div class="a c" style="left:127px;width:46px">金城国<span class="ell">...</span></div>
<div class="a c" style="left:173px;width:42px"></div>
<div class="a c" style="left:215px;width:73px"></div>
<div class="a c dsh" style="left:288px;width:73px">----</div>
<div class="a c dsh" style="left:361px;width:73px">----</div>
<div class="a c" style="left:434px;width:73px">无待缴费用</div>
<div class="a c" style="left:507px;width:42px">办公室</div>
<div class="a c n" style="left:549px;width:41px">240</div>
<div class="a c" style="left:590px;width:42px">1栋</div>
<div class="a c" style="left:632px;width:41px">1单元</div>
<div class="a c n" style="left:673px;width:42px">20</div>
<div class="a c" style="left:715px;width:63px"></div>
<div class="a c" style="left:778px;width:82px;text-align:right;padding-right:0">紫荆山路</div>
</div>
<div class="a row " style="top:444px">
<div class="a c m" style="left:0px;width:38px;text-align:left;padding-left:0;text-indent:-0.3px">D8006</div>
<div class="a c" style="left:38px;width:46px"></div>
<div class="a c" style="left:84px;width:43px">商铺</div>
<div class="a c" style="left:127px;width:46px">金城国<span class="ell">...</span></div>
<div class="a c" style="left:173px;width:42px"></div>
<div class="a c" style="left:215px;width:73px"></div>
<div class="a c dsh" style="left:288px;width:73px">----</div>
<div class="a c dsh" style="left:361px;width:73px">----</div>
<div class="a c" style="left:434px;width:73px">无待缴费用</div>
<div class="a c" style="left:507px;width:42px">办公室</div>
<div class="a c n" style="left:549px;width:41px">240</div>
<div class="a c" style="left:590px;width:42px">1栋</div>
<div class="a c" style="left:632px;width:41px">1单元</div>
<div class="a c n" style="left:673px;width:42px">20</div>
<div class="a c" style="left:715px;width:63px"></div>
<div class="a c" style="left:778px;width:82px;text-align:right;padding-right:0">紫荆山路</div>
</div>
<div class="a row g" style="top:457px">
<div class="a c m" style="left:0px;width:38px;text-align:left;padding-left:0;text-indent:-0.3px">D8007</div>
<div class="a c" style="left:38px;width:46px"></div>
<div class="a c" style="left:84px;width:43px">商铺</div>
<div class="a c" style="left:127px;width:46px">金城国<span class="ell">...</span></div>
<div class="a c" style="left:173px;width:42px"></div>
<div class="a c" style="left:215px;width:73px"></div>
<div class="a c dsh" style="left:288px;width:73px">----</div>
<div class="a c dsh" style="left:361px;width:73px">----</div>
<div class="a c" style="left:434px;width:73px">无待缴费用</div>
<div class="a c" style="left:507px;width:42px">办公室</div>
<div class="a c n" style="left:549px;width:41px">240</div>
<div class="a c" style="left:590px;width:42px">1栋</div>
<div class="a c" style="left:632px;width:41px">1单元</div>
<div class="a c n" style="left:673px;width:42px">20</div>
<div class="a c" style="left:715px;width:63px"></div>
<div class="a c" style="left:778px;width:82px;text-align:right;padding-right:0">紫荆山路</div>
</div>
<div class="a row " style="top:470px">
<div class="a c m" style="left:0px;width:38px;text-align:left;padding-left:0;text-indent:-0.3px">D8008</div>
<div class="a c" style="left:38px;width:46px"></div>
<div class="a c" style="left:84px;width:43px">商铺</div>
<div class="a c" style="left:127px;width:46px">金城国<span class="ell">...</span></div>
<div class="a c" style="left:173px;width:42px"></div>
<div class="a c" style="left:215px;width:73px"></div>
<div class="a c dsh" style="left:288px;width:73px">----</div>
<div class="a c dsh" style="left:361px;width:73px">----</div>
<div class="a c" style="left:434px;width:73px">无待缴费用</div>
<div class="a c" style="left:507px;width:42px">办公室</div>
<div class="a c n" style="left:549px;width:41px">240</div>
<div class="a c" style="left:590px;width:42px">1栋</div>
<div class="a c" style="left:632px;width:41px">1单元</div>
<div class="a c n" style="left:673px;width:42px">20</div>
<div class="a c" style="left:715px;width:63px"></div>
<div class="a c" style="left:778px;width:82px;text-align:right;padding-right:0">紫荆山路</div>
</div>
<div class="a row g" style="top:483px">
<div class="a c m" style="left:0px;width:38px;text-align:left;padding-left:0;text-indent:-0.3px">D8009</div>
<div class="a c" style="left:38px;width:46px"></div>
<div class="a c" style="left:84px;width:43px">商铺</div>
<div class="a c" style="left:127px;width:46px">金城国<span class="ell">...</span></div>
<div class="a c" style="left:173px;width:42px"></div>
<div class="a c" style="left:215px;width:73px"></div>
<div class="a c dsh" style="left:288px;width:73px">----</div>
<div class="a c dsh" style="left:361px;width:73px">----</div>
<div class="a c" style="left:434px;width:73px">无待缴费用</div>
<div class="a c" style="left:507px;width:42px">办公室</div>
<div class="a c n" style="left:549px;width:41px">240</div>
<div class="a c" style="left:590px;width:42px">1栋</div>
<div class="a c" style="left:632px;width:41px">1单元</div>
<div class="a c n" style="left:673px;width:42px">20</div>
<div class="a c" style="left:715px;width:63px"></div>
<div class="a c" style="left:778px;width:82px;text-align:right;padding-right:0">紫荆山路</div>
</div>
<div class="a row " style="top:496px">
<div class="a c m" style="left:0px;width:38px;text-align:left;padding-left:0;text-indent:-0.3px">D8010</div>
<div class="a c" style="left:38px;width:46px"></div>
<div class="a c" style="left:84px;width:43px">商铺</div>
<div class="a c" style="left:127px;width:46px">金城国<span class="ell">...</span></div>
<div class="a c" style="left:173px;width:42px"></div>
<div class="a c" style="left:215px;width:73px"></div>
<div class="a c dsh" style="left:288px;width:73px">----</div>
<div class="a c dsh" style="left:361px;width:73px">----</div>
<div class="a c" style="left:434px;width:73px">无待缴费用</div>
<div class="a c" style="left:507px;width:42px">办公室</div>
<div class="a c n" style="left:549px;width:41px">240</div>
<div class="a c" style="left:590px;width:42px">1栋</div>
<div class="a c" style="left:632px;width:41px">1单元</div>
<div class="a c n" style="left:673px;width:42px">20</div>
<div class="a c" style="left:715px;width:63px"></div>
<div class="a c" style="left:778px;width:82px;text-align:right;padding-right:0">紫荆山路</div>
</div>
<div class="a vl" style="left:166px;top:80px;height:429px"></div>
<div class="a vl" style="left:212px;top:80px;height:429px"></div>
<div class="a vl" style="left:255px;top:80px;height:429px"></div>
<div class="a vl" style="left:301px;top:80px;height:429px"></div>
<div class="a vl" style="left:343px;top:80px;height:429px"></div>
<div class="a vl" style="left:416px;top:80px;height:429px"></div>
<div class="a vl" style="left:489px;top:80px;height:429px"></div>
<div class="a vl" style="left:562px;top:80px;height:429px"></div>
<div class="a vl" style="left:635px;top:80px;height:429px"></div>
<div class="a vl" style="left:677px;top:80px;height:429px"></div>
<div class="a vl" style="left:718px;top:80px;height:429px"></div>
<div class="a vl" style="left:760px;top:80px;height:429px"></div>
<div class="a vl" style="left:801px;top:80px;height:429px"></div>
<div class="a vl" style="left:843px;top:80px;height:429px"></div>
<div class="a vl" style="left:906px;top:80px;height:429px"></div>
<div class="a" id="vsb"></div>
<div class="a" id="hsb"></div>
<div class="a" id="hth"></div>
<div class="a" id="vth"></div>
<div class="a" style="left:988px;top:69px;width:9px;height:10px;background:#fafafa"></div>
<svg class="a" style="left:990px;top:72px" width="6" height="5"><path d="M0.8 3.8L3 1.3L5.2 3.8" fill="none" stroke="#222" stroke-width="0.9"/></svg>
<div class="a" id="status"></div>
<div class="a" style="left:114px;top:509.5px;width:9.5px;height:8px;background:#fbfbfb;border-right:1.3px solid #a8a8a8;border-top:1px solid #b8b8b8"></div>
<svg class="a" style="left:116px;top:511px" width="5" height="5"><path d="M1.2 2.6L3.4 1.2V4Z" fill="#000"/></svg>
<div class="a" style="left:979.6px;top:508.7px;width:9.3px;height:8.8px;background:#f8f8f8;border:1px solid #c8c8c8"></div>
<svg class="a" style="left:982px;top:510.5px" width="5" height="6"><path d="M1.2 0.8L4 3L1.2 5.2Z" fill="#000"/></svg>
<div class="a" style="left:989px;top:509px;width:9px;height:9px;background:#fafafa"></div>
<div class="a t st" style="left:125.4px">已出租：<b>0</b></div>
<div class="a t st" style="left:204.5px">未出租：<b>45</b></div>
<div class="a t st" style="left:275.4px">停用：<b>0</b></div>
<div class="a t st" style="left:337.7px">总房数：<b>45</b></div>
<div class="a" id="rb"></div>
<div class="a" id="rbw"></div>
<div class="a" id="orb"></div>
<div class="a t" style="left:994px;top:500px;font-size:6px;color:#fff;font-style:italic;font-weight:bold">77</div>
</body></html>
